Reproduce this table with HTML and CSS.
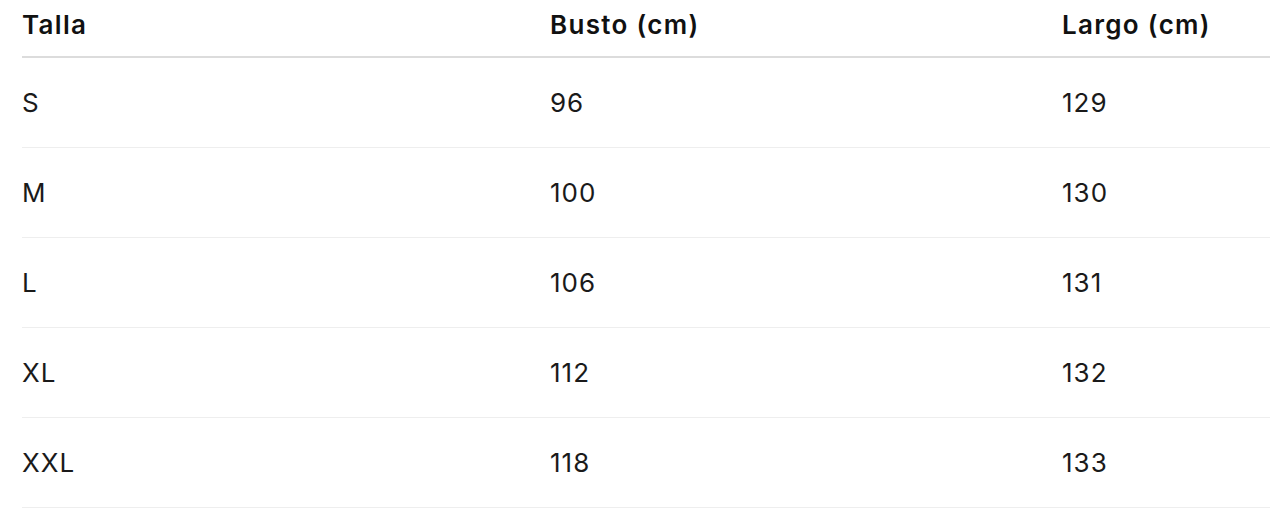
FILE: index.html
```html
<!DOCTYPE html>
<html lang="es">
<head>
<meta charset="utf-8">
<title>Tabla de tallas</title>
<link rel="stylesheet" href="styles.css">
</head>
<body>
<div class="wrap">
  <table class="sizes">
    <colgroup>
      <col class="c1"><col class="c2"><col class="c3">
    </colgroup>
    <thead>
      <tr><th>Talla</th><th>Busto (cm)</th><th>Largo (cm)</th></tr>
    </thead>
    <tbody>
      <tr><td>S</td><td>96</td><td>129</td></tr>
      <tr><td>M</td><td>100</td><td>130</td></tr>
      <tr><td>L</td><td>106</td><td>131</td></tr>
      <tr><td>XL</td><td>112</td><td>132</td></tr>
      <tr><td>XXL</td><td>118</td><td>133</td></tr>
    </tbody>
  </table>
</div>
</body>
</html>
```

FILE: styles.css
```css
html, body {
  margin: 0;
  padding: 0;
  background: #ffffff;
}
.wrap {
  padding-left: 22px;
}
.sizes {
  border-collapse: collapse;
  table-layout: fixed;
  width: 1248px;
  font-family: Inter, "Noto Sans", sans-serif;
  font-size: 26px;
  line-height: 36px;
  letter-spacing: 1px;
  color: #1a1a1a;
}
.c1 { width: 528px; }
.c2 { width: 512px; }
.c3 { width: 208px; }
.sizes th {
  text-align: left;
  font-weight: 600;
  letter-spacing: 1.3px;
  color: #111111;
  padding: 7px 0 13px;
  border-bottom: 2px solid #dcdcdc;
}
.sizes td {
  padding: 27px 0 26px;
  border-bottom: 1px solid #eeeeee;
}
```
